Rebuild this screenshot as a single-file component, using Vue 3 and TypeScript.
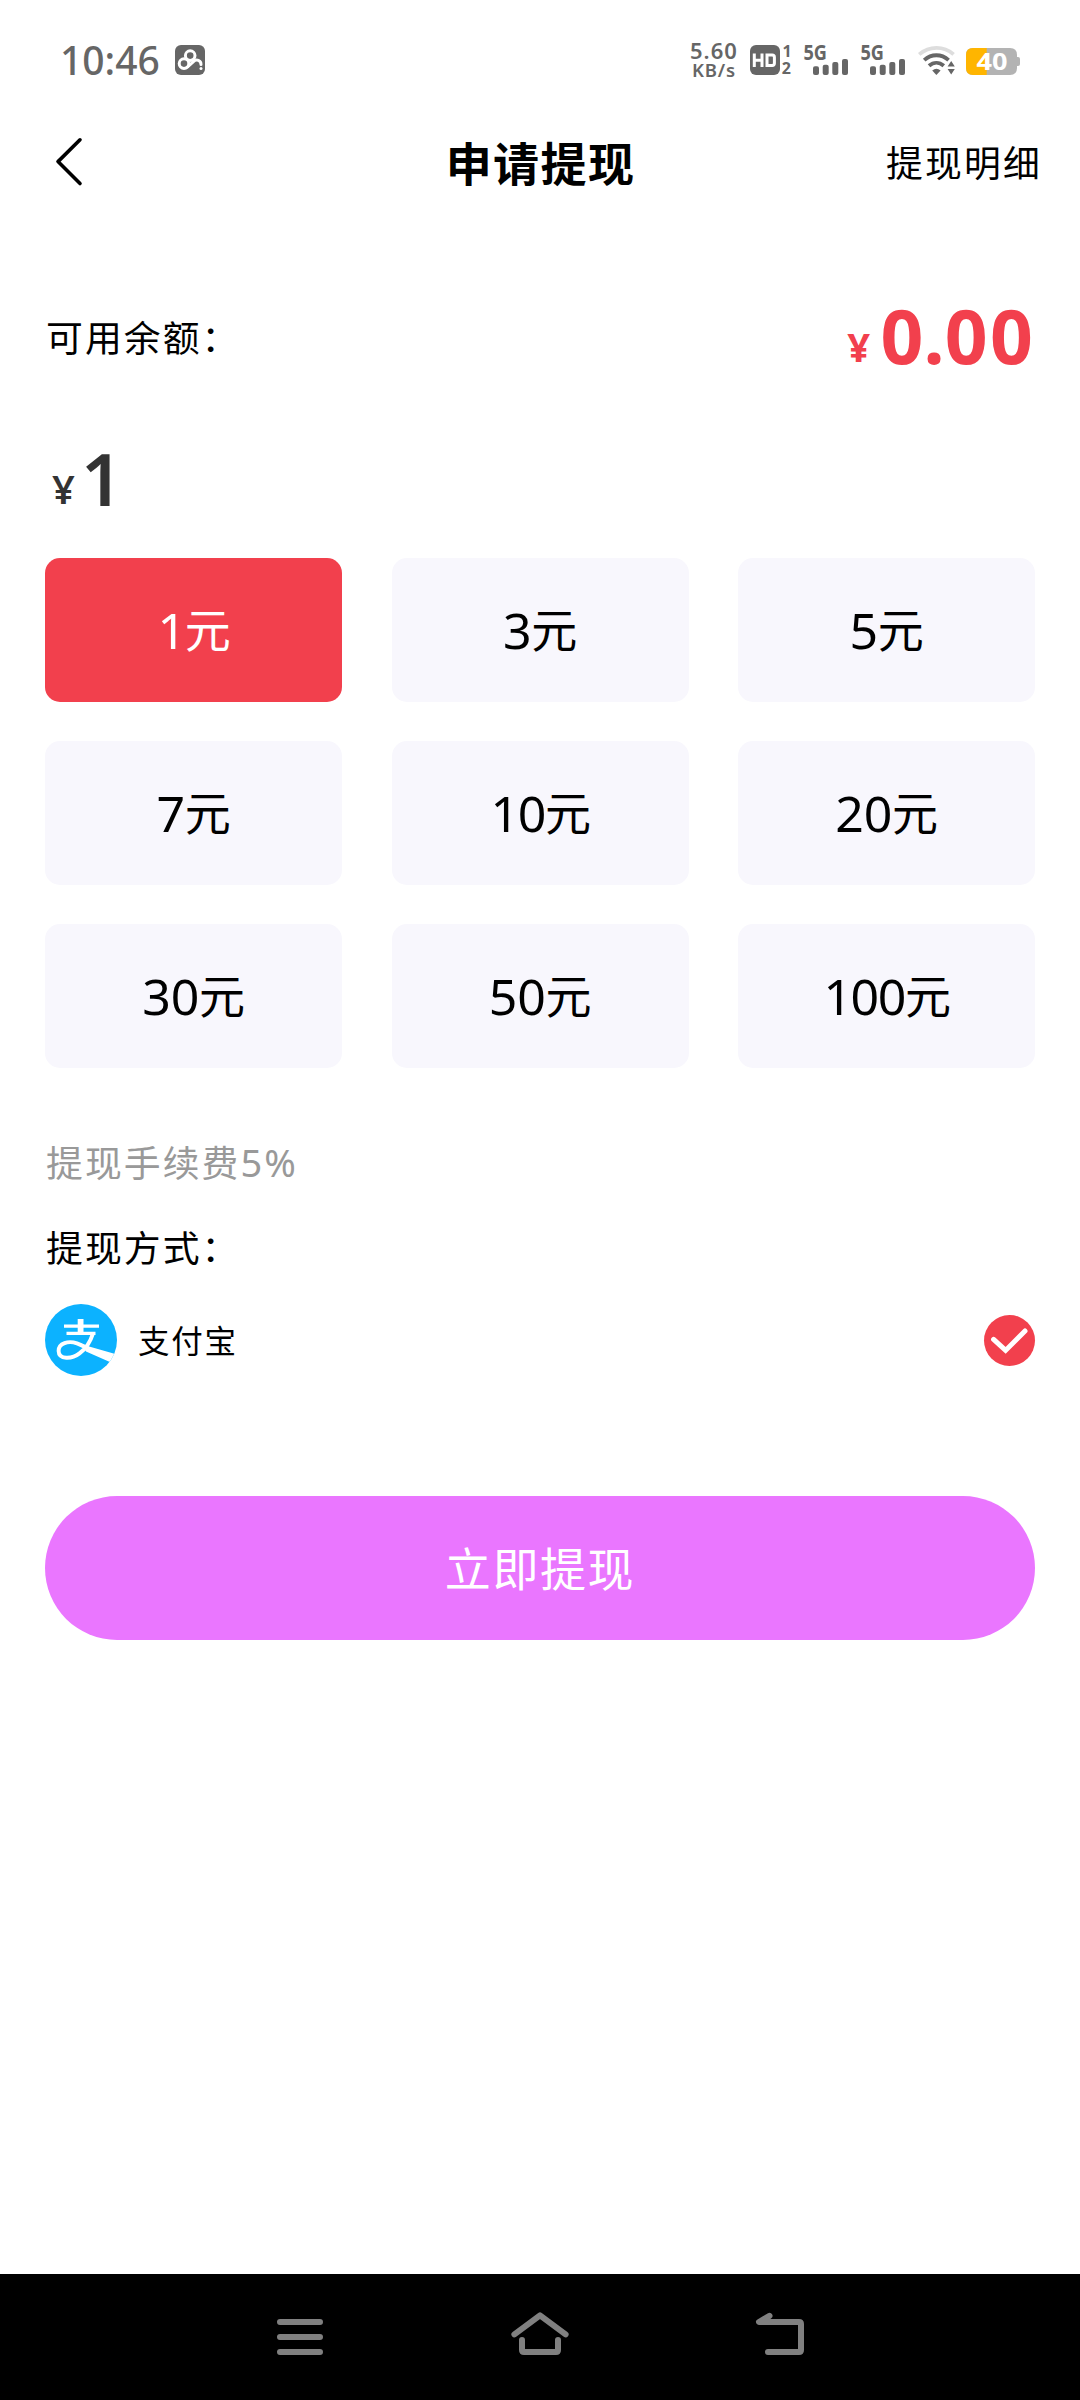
<script setup lang="ts">
import { ref } from 'vue'

const amounts: number[] = [1, 3, 5, 7, 10, 20, 30, 50, 100]
const selected = ref<number>(1)
</script>

<template>
  <div class="screen">
    <div class="status">
      <span class="time">10:46</span>
      <svg class="app-icon" width="30" height="30" viewBox="0 0 30 30">
        <rect width="30" height="30" rx="6" fill="#666" />
        <g fill="none" stroke="#fff" stroke-width="3">
          <circle cx="15.2" cy="10.6" r="4.8" />
          <circle cx="9" cy="18.6" r="4.8" />
          <path d="M12.6 22 L18.4 16.6 C21.6 13.4 26 15.6 26 19.4" stroke-linecap="round" />
        </g>
        <circle cx="26" cy="23.4" r="1.5" fill="#fff" />
      </svg>
      <div class="speed">
        <span class="speed-num">5.60</span>
        <span class="speed-unit">KB/s</span>
      </div>
      <svg class="hd" width="43" height="30" viewBox="0 0 43 30">
        <rect width="30" height="30" rx="6" fill="#666" />
        <g fill="none" stroke="#fff" stroke-width="3">
          <path d="M4.3 8.6V22M4.3 15.2H12M12 8.6V22" />
          <path d="M17 10.1V20.5H22.2Q24.4 20.5 24.4 18.3V12.3Q24.4 10.1 22.2 10.1Z" />
        </g>
        <text x="32.4" y="11.8" class="sim">1</text>
        <text x="31.8" y="29.3" class="sim">2</text>
      </svg>
      <svg v-for="n in 2" :key="n" class="signal" width="45" height="30" viewBox="0 0 45 30">
        <text x="-0.5" y="14.6" class="net" textLength="23.5" lengthAdjust="spacingAndGlyphs">5G</text>
        <g fill="#666">
          <rect x="9" y="21.3" width="6" height="8.7" rx="2" />
          <rect x="18.7" y="19.7" width="6" height="10.3" rx="2" />
          <rect x="28.3" y="17" width="6" height="13" rx="2" />
          <rect x="38" y="14" width="6" height="16" rx="2" />
        </g>
      </svg>
      <svg class="wifi" width="38" height="30" viewBox="0 0 38 30">
        <g fill="none" stroke="#666" stroke-width="3.8">
          <path d="M1.2 9.4C11.5 0.8 25.5 0.8 35.6 9.4" stroke="#ddd" />
          <path d="M6.2 15.2C13.5 8.6 23.3 8.6 30.6 15.2" />
          <path d="M11 20.8C15.6 16.8 21.2 16.8 25.8 20.8" />
        </g>
        <path d="M14.2 25.4Q18.4 22.2 22.6 25.4L18.4 30Z" fill="#666" />
        <path d="M29.6 21.4L33.2 16L36.8 21.4ZM29.6 24L33.2 29.4L36.8 24Z" fill="#666" />
      </svg>
      <svg class="battery" width="54" height="27" viewBox="0 0 54 27">
        <path d="M7 0H44Q51 0 51 7V20Q51 27 44 27H7Q0 27 0 20V7Q0 0 7 0Z" fill="#b3b3b3" />
        <path d="M51 9H52Q54 9 54 11V16Q54 18 52 18H51Z" fill="#b3b3b3" />
        <path d="M7 0H20.7V27H7Q0 27 0 20V7Q0 0 7 0Z" fill="#ffb500" />
        <text x="10.4" y="22.4" class="level" textLength="31" lengthAdjust="spacingAndGlyphs">40</text>
      </svg>
    </div>

    <header class="header">
      <svg class="back" width="30" height="50" viewBox="0 0 30 50">
        <path d="M25 3.8L3 25.6L25 47.6" fill="none" stroke="#000" stroke-width="3.6" stroke-linecap="round" stroke-linejoin="round" />
      </svg>
      <h1 class="title">申请提现</h1>
      <span class="detail">提现明细</span>
    </header>

    <main class="content">
      <div class="balance">
        <span class="label">可用余额：</span>
        <span class="money red"><span class="yen">¥</span>0<span class="dot">.</span>00</span>
      </div>
      <div class="money amount"><span class="yen">¥</span>{{ selected }}</div>

      <div class="grid">
        <button
          v-for="a in amounts"
          :key="a"
          class="option"
          :class="{ active: a === selected, narrow: String(a).startsWith('1') }"
          @click="selected = a"
        >{{ a }}<span class="yuan">元</span></button>
      </div>

      <div class="label fee">提现手续费<span class="pct">5%</span></div>
      <div class="label way">提现方式：</div>

      <div class="pay">
        <svg width="72" height="72" viewBox="0 0 72 72">
          <defs>
            <clipPath id="disc"><circle cx="36" cy="36" r="36" /></clipPath>
          </defs>
          <circle cx="36" cy="36" r="36" fill="#0cb2ff" />
          <g clip-path="url(#disc)">
            <g fill="none" stroke="#fff">
              <path d="M35.6 15V30" stroke-width="5.8" />
              <path d="M19 22.2H54M21.5 29.4H50.5" stroke-width="3.2" />
              <path d="M48 29.4C45.5 37.5 40.5 45 34.5 49.4C27 55.2 13.8 56 13.6 47C13.5 39 23.5 36.4 32 39.4C36 40.8 39 42.4 43 44.4" stroke-width="3.9" />
            </g>
            <path d="M36 39.4L45 42.8L72 50.4L66 58.4L41 47.4Z" fill="#fff" />
          </g>
        </svg>
        <span class="pay-name">支付宝</span>
        <svg class="check" width="51" height="51" viewBox="0 0 51 51">
          <circle cx="25.5" cy="25.5" r="25.5" fill="#f2404d" />
          <path d="M9.6 24.4L21.6 35.4L41 16" fill="none" stroke="#fff" stroke-width="5" stroke-linecap="round" />
        </svg>
      </div>

      <button class="submit">立即提现</button>
    </main>

    <nav class="nav">
      <svg width="46" height="46" viewBox="0 0 46 46">
        <path d="M3 8H43M3 23H43M3 38H43" stroke="#808080" stroke-width="6" stroke-linecap="round" />
      </svg>
      <svg width="58" height="46" viewBox="0 0 58 46">
        <g fill="none" stroke="#808080" stroke-width="6" stroke-linecap="round" stroke-linejoin="round">
          <path d="M3.4 20.4L29 1.4L54.6 20.4" />
          <path d="M11 26V36Q11 38 13 38H45Q47 38 47 36V26" />
        </g>
      </svg>
      <svg width="48" height="46" viewBox="0 0 48 46">
        <path d="M13.5 1.8L3 8H43Q45 8 45 10V36Q45 38 43 38H12" fill="none" stroke="#808080" stroke-width="6" stroke-linecap="round" stroke-linejoin="round" />
      </svg>
    </nav>
  </div>
</template>

<style>
body {
  background: #fff;
}
</style>

<style scoped>
.screen {
  display: flex;
  flex-direction: column;
  width: 1080px;
  height: 2400px;
  background: #fff;
  color: #000;
  font-family: "Noto Sans CJK SC", "Noto Sans", sans-serif;
  overflow: hidden;
}
svg {
  display: block;
  flex: none;
  overflow: visible;
}
button {
  border: 0;
  padding: 0;
  margin: 0;
}

.status {
  display: flex;
  align-items: center;
  box-sizing: border-box;
  height: 120px;
  padding: 0 60px;
  color: #666;
  font-family: "Noto Sans", sans-serif;
}
.time {
  width: 115px;
  font-size: 39px;
  font-weight: 500;
  line-height: 40px;
  white-space: nowrap;
}
.speed {
  display: flex;
  flex-direction: column;
  width: 60px;
  margin-left: 485px;
  font-weight: 600;
  white-space: nowrap;
}
.speed-num {
  font-size: 22px;
  line-height: 19px;
  letter-spacing: 1px;
}
.speed-unit {
  padding-left: 2px;
  font-size: 18.5px;
  line-height: 19px;
  letter-spacing: 0.8px;
}
.sim {
  font: 700 16px "Noto Sans", sans-serif;
  fill: #666;
}
.net {
  font: 700 20.5px "Noto Sans", sans-serif;
  fill: #666;
}
.hd {
  margin-right: 11px;
}
.signal {
  margin-right: 12px;
}
.wifi {
  margin-right: 10px;
}
.battery {
  margin-top: 3px;
}
.level {
  font: 700 24px "Noto Sans", sans-serif;
  fill: #fff;
}

.header {
  display: grid;
  grid-template-columns: 1fr auto 1fr;
  align-items: center;
  height: 82px;
  padding: 0 38px 0 55px;
}
.title {
  margin: 0 16px 0 0;
  font-size: 46px;
  font-weight: 700;
  line-height: 80px;
  letter-spacing: 1.4px;
}
.detail {
  justify-self: end;
  font-size: 36.8px;
  line-height: 80px;
  letter-spacing: 2.2px;
}

.content {
  flex: 1;
  padding: 83px 45px 0;
}
.label {
  padding-left: 1px;
  font-size: 36.8px;
  line-height: 50px;
  letter-spacing: 2.1px;
  white-space: nowrap;
}
.balance {
  display: flex;
  align-items: center;
  justify-content: space-between;
  height: 100px;
}
.balance .label {
  padding-top: 2px;
}
.money {
  font-family: "Noto Sans", sans-serif;
  font-size: 75px;
  font-weight: 700;
  line-height: 100px;
  letter-spacing: 2.2px;
}
.red {
  color: #f2404d;
}
.dot {
  margin: 0 -2px;
}
.yen {
  margin-right: 8px;
  font-size: 40px;
  line-height: 1;
  position: relative;
  top: -2px;
}
.amount {
  margin-top: 43px;
  padding-left: 7px;
  color: #333;
  font-size: 73px;
  font-weight: 600;
}
.amount .yen {
  margin-right: 4px;
}
.grid {
  display: grid;
  grid-template-columns: repeat(3, 297px);
  gap: 39px 49.5px;
  margin-top: 30px;
}
.option {
  height: 144px;
  border-radius: 15px;
  background: #f8f7fd;
  color: #000;
  font-family: "Noto Sans", sans-serif;
  font-size: 50px;
  line-height: 144px;
  letter-spacing: -0.3px;
}
.narrow {
  letter-spacing: -1.4px;
}
.active {
  background: #f2404d;
  color: #fff;
}
.yuan {
  font-family: "Noto Sans CJK SC", sans-serif;
  font-size: 46px;
  line-height: 1;
  vertical-align: 2px;
}
.fee {
  margin-top: 68px;
  color: #999;
}
.pct {
  font-family: "Noto Sans", sans-serif;
  font-size: 38px;
  line-height: 1;
}
.way {
  margin-top: 35px;
}
.pay {
  display: flex;
  align-items: center;
  height: 72px;
  margin-top: 33px;
}
.pay-name {
  margin-left: 21px;
  font-size: 31.5px;
  line-height: 68px;
  letter-spacing: 1.8px;
  padding-bottom: 2px;
}
.check {
  margin-left: auto;
}
.submit {
  display: block;
  width: 990px;
  height: 144px;
  margin-top: 120px;
  padding-bottom: 5px;
  border-radius: 72px;
  background: #ea76ff;
  color: #fff;
  font-family: "Noto Sans CJK SC", sans-serif;
  font-size: 46px;
  line-height: 138px;
  letter-spacing: 1.6px;
}

.nav {
  display: flex;
  align-items: center;
  justify-content: space-between;
  box-sizing: border-box;
  height: 126px;
  padding: 0 276px 0 277px;
  background: #000;
}
</style>
